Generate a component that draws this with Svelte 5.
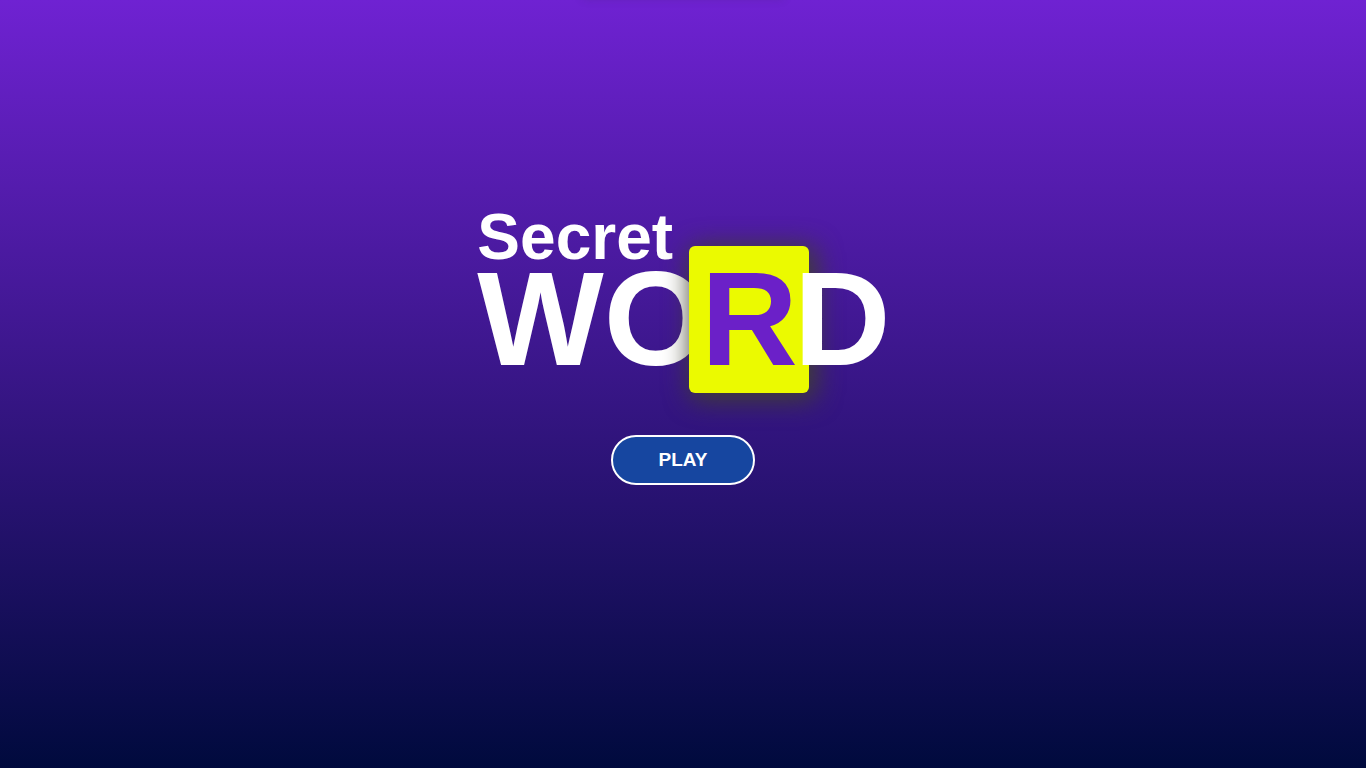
<script>
  let started = $state(false);
</script>

<main>
  <h1>
    <span class="secret">Secret</span>
    <span class="word">WO<span class="tile">R</span><span class="last">D</span></span>
  </h1>
  <button type="button" aria-pressed={started} onclick={() => (started = !started)}>PLAY</button>
</main>

<style>
  :global(body) {
    margin: 0;
  }

  main {
    position: relative;
    box-sizing: border-box;
    min-height: 100vh;
    display: flex;
    flex-direction: column;
    align-items: center;
    padding-top: 200px;
    overflow: hidden;
    background: linear-gradient(180deg, #6f22d2 0%, #30147c 57%, #000a3d 100%);
    font-family: "Liberation Sans", Arial, sans-serif;
    color: #fff;
  }

  /* soft edge of the panel parked above the window */
  main::before {
    content: "";
    position: absolute;
    top: -12px;
    width: 200px;
    height: 10px;
    box-shadow: 0 0 10px rgba(60, 40, 90, 0.3);
  }

  h1 {
    margin: 0;
    padding-left: 2px;
    display: flex;
    flex-direction: column;
    font-weight: 700;
  }

  .secret {
    font-size: 64px;
    line-height: 74px;
  }

  .word {
    display: flex;
    font-size: 134px;
    line-height: 90px;
  }

  .tile {
    position: relative;
    margin: -28px -15px 0 -19px;
    padding: 28px 11px 29px 12px;
    border-radius: 6px;
    background: #ebfa00;
    color: #6b20c8;
    box-shadow: 4px 4px 26px 3px #40402f;
  }

  .last {
    position: relative;
  }

  button {
    box-sizing: border-box;
    width: 144px;
    height: 50px;
    margin-top: 42px;
    border: 2px solid #fff;
    border-radius: 25px;
    background: #1646a0;
    color: #fff;
    font: 700 19px "Liberation Sans", Arial, sans-serif;
    cursor: pointer;
  }
</style>
